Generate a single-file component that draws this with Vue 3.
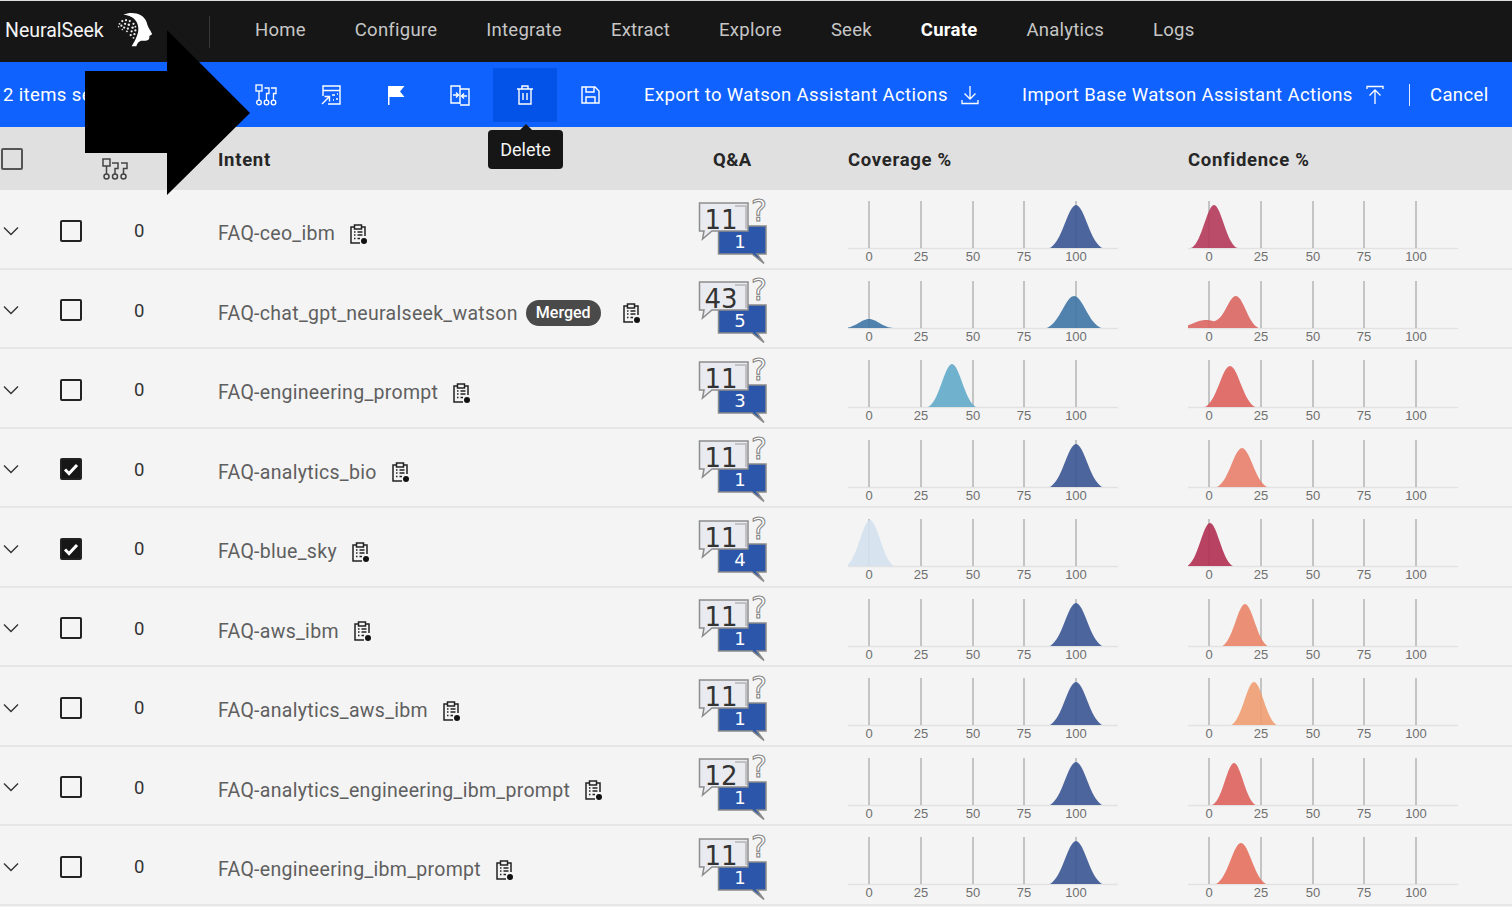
<template>
  <div class="page">
    <nav class="topnav">
      <div class="brand">
        <span class="brand-name">NeuralSeek</span>
        <svg class="brand-logo" width="47" height="42" viewBox="0 0 50 45">
          <path fill="#fff" d="M14 7C24 3 36 6 39 15C40 19 41 21 43 24L45 28L42 30C42.500 33 41 35 38 35L33 35C30 36 29 38 28 41L23 41C28 33 31 26 30 20C29 12 22 8 14 7Z" />
          <circle v-for="(dot, i) in logoDots" :key="i" :cx="dot[0]" :cy="dot[1]" :r="dot[2]" fill="#eee" />
        </svg>
      </div>
      <span class="nav-divider"></span>
      <div class="nav-links">
        <a v-for="link in navLinks" :key="link" class="nav-link" :class="{ active: link === 'Curate' }">{{ link }}</a>
      </div>
    </nav>

    <div class="action-bar">
      <span class="selected-count">2 items selected</span>
      <div class="action-icons">
        <button class="icon-btn">
          <svg width="24" height="24" viewBox="0 0 24 24" fill="none" stroke="#fff" stroke-width="1.300">
            <rect x="2" y="2" width="6" height="6" />
            <path d="M5 8V17M10.500 5H15V10.500H12.500V17M17 5H22V10.500H19.500V17" />
            <circle cx="5" cy="19.500" r="2.300" />
            <circle cx="12.500" cy="19.500" r="2.300" />
            <circle cx="19.500" cy="19.500" r="2.300" />
          </svg>
        </button>
        <button class="icon-btn">
          <svg width="24" height="24" viewBox="0 0 24 24" fill="none" stroke="#fff" stroke-width="1.400">
            <path d="M4 13V3H21V21H9M4 7.500H21" />
            <path d="M3 21L10 14M5.500 13.500H10.500V18.500M13 12H16M17 16H19M14 17H15M18 11H19" />
          </svg>
        </button>
        <button class="icon-btn">
          <svg width="24" height="24" viewBox="0 0 24 24" fill="#fff">
            <path d="M4 3H20.500L16 8.500L20.500 14H5.500V22H4Z" />
          </svg>
        </button>
        <button class="icon-btn">
          <svg width="24" height="24" viewBox="0 0 24 24" fill="none" stroke="#fff" stroke-width="1.400">
            <path d="M12 20H3V3H12V21M12 6H21V22H12" />
            <path d="M5 12H10M8 9.500L10.500 12L8 14.500M19 13H14M16 10.500L13.500 13L16 15.500" />
          </svg>
        </button>
        <button class="icon-btn is-hover">
          <svg width="24" height="24" viewBox="0 0 24 24" fill="none" stroke="#fff" stroke-width="1.400">
            <path d="M4 6H20M9 6V3H15V6M6 6V21H18V6M10 10V17M14 10V17" />
          </svg>
        </button>
        <button class="icon-btn">
          <svg width="24" height="24" viewBox="0 0 24 24" fill="none" stroke="#fff" stroke-width="1.400">
            <path d="M4 4H17L21 8V20H4ZM8 4V9H16V4M8 20V14H17V20" />
          </svg>
        </button>
      </div>
      <a class="bar-action bar-export">
        Export to Watson Assistant Actions
        <svg width="20" height="20" viewBox="0 0 20 20" fill="none" stroke="#fff" stroke-width="1.300">
          <path d="M10 1V14M4.500 8.500L10 14L15.500 8.500M2 15V18.500H18V15" />
        </svg>
      </a>
      <a class="bar-action bar-import">
        Import Base Watson Assistant Actions
        <svg width="20" height="20" viewBox="0 0 20 20" fill="none" stroke="#fff" stroke-width="1.300">
          <path d="M10 19V5M4.500 10.500L10 5L15.500 10.500M2 4V1.500H18V4" />
        </svg>
      </a>
      <span class="bar-divider"></span>
      <a class="bar-action bar-cancel">Cancel</a>
      <div class="tooltip">Delete</div>
    </div>

    <div class="table">
      <div class="table-head">
        <span class="box head-box"></span>
        <svg class="head-tree" width="28" height="24" viewBox="0 0 28 24" fill="none" stroke="#444" stroke-width="1.500">
          <rect x="2" y="2" width="7" height="7" />
          <path d="M5.500 9V17M11 6H17V11.500H14V17M20 6H26V11.500H22.500V17" />
          <circle cx="5.500" cy="19.500" r="2.500" />
          <circle cx="14" cy="19.500" r="2.500" />
          <circle cx="22.500" cy="19.500" r="2.500" />
        </svg>
        <span class="head-label head-intent">Intent</span>
        <span class="head-label head-qa">Q&amp;A</span>
        <span class="head-label">Coverage %</span>
        <span class="head-label">Confidence %</span>
      </div>

      <div v-for="row in rows" :key="row.name" class="table-row">
        <svg class="chevron" width="16" height="10" viewBox="0 0 16 10" fill="none" stroke="#333" stroke-width="1.400">
          <path d="M1 1.500L8 8.500L15 1.500" />
        </svg>
        <span class="box row-box" :class="{ checked: row.checked }">
          <svg v-if="row.checked" width="16" height="14" viewBox="0 0 16 14" fill="none" stroke="#fff" stroke-width="3">
            <path d="M2 7.500L6 11.500L14 3" />
          </svg>
        </span>
        <span class="count">0</span>
        <div class="intent">
          <span class="intent-name">{{ row.name }}</span>
          <span v-if="row.merged" class="merged">Merged</span>
          <svg class="clip" width="20" height="22" viewBox="0 0 20 22" fill="none" stroke="#222" stroke-width="1.500">
            <path d="M6 4H3V20H12M14 4H17V13" />
            <rect x="6.500" y="2" width="7" height="4" />
            <path d="M6 9H7.500M9.500 9H14.500M6 12H7.500M9.500 12H14.500M6 15.500H7.500M9.500 15.500H12" />
            <circle cx="16" cy="18" r="3" fill="#111" stroke="none" />
          </svg>
        </div>
        <svg class="qa" width="80" height="78" viewBox="0 -6 80 78">
          <path d="M23.500 30H71V58H62L69 67.500L57 58H23.500Z" fill="#2b56a9" stroke="#8a8a8a" stroke-width="1.500" />
          <text x="64" y="25" class="qa-mark">?</text>
          <path d="M4.500 7H53V35H17L7.500 43L9 35H4.500Z" fill="#e9ebf0" stroke="#8d8d8d" stroke-width="1.500" />
          <path d="M40 10H51V33" fill="none" stroke="#b5b5b5" stroke-width="1.500" />
          <text x="26" y="33" class="qa-total">{{ row.total }}</text>
          <text x="45" y="52" class="qa-part">{{ row.part }}</text>
        </svg>
        <svg v-for="chart in row.charts" :key="chart.key" class="chart" width="272" height="79" viewBox="0 0 272 79">
          <path d="M0 58.500H270" stroke="#e2e2e2" stroke-width="1.500" />
          <path v-for="tick in ticks" :key="tick.label" :d="`M${tick.x} 11V58`" stroke="#b4b4b4" stroke-width="1.500" />
          <path :d="chart.d" :fill="chart.color" fill-opacity="0.9" />
          <text v-for="tick in ticks" :key="tick.label" :x="tick.x" y="70.500" class="tick-label">{{ tick.label }}</text>
        </svg>
      </div>
    </div>

    <svg class="big-arrow" width="170" height="170" viewBox="0 0 170 170">
      <polygon points="0,41 82,41 82,0 165,83 82,165 82,123 0,123" fill="#000" />
    </svg>
  </div>
</template>

<script setup>
const navLinks = ['Home', 'Configure', 'Integrate', 'Extract', 'Explore', 'Seek', 'Curate', 'Analytics', 'Logs'];

const logoDots = [
  [10, 17, 1], [13, 14, 1.2], [17, 13, 1.2], [21, 14, 1.2], [25, 17, 1.2],
  [12, 19, 1.2], [16, 17, 1.2], [20, 18, 1.3], [24, 21, 1.3], [27, 20, 1],
  [15, 21, 1.2], [19, 22, 1.2], [23, 25, 1.2], [27, 24, 1.2], [18, 25, 1],
  [22, 29, 1.2], [26, 28, 1.2], [25, 32, 1], [9, 20, 0.8], [13, 23, 0.8],
];

const ticks = [
  { x: 21, label: '0' },
  { x: 73, label: '25' },
  { x: 125, label: '50' },
  { x: 176, label: '75' },
  { x: 228, label: '100' },
];

// each bump is [peak x, peak height, sigma], tails cut off so the foot stays narrow
const TAIL = 0.06;
const curvePath = (bumps) => {
  let d = 'M0 58';
  for (let x = 0; x <= 270; x += 1.5) {
    let h = 0;
    for (const [cx, height, sigma] of bumps) {
      const g = Math.exp(-((x - cx) ** 2) / (2 * sigma * sigma));
      h += height * Math.max(0, (g - TAIL) / (1 - TAIL));
    }
    d += `L${x} ${(58 - h).toFixed(2)}`;
  }
  return `${d}L270 58Z`;
};

const navy = '#3a5592';

const rowData = [
  { name: 'FAQ-ceo_ibm', total: 11, part: 1, coverage: [[228, 43, 11]], covColor: navy, confidence: [[26, 43, 9.5]], confColor: '#b43a5a' },
  { name: 'FAQ-chat_gpt_neuralseek_watson', merged: true, total: 43, part: 5, coverage: [[21, 9, 10], [226, 32, 11.5]], covColor: '#3f75a5', confidence: [[48, 32, 9.5], [18, 8, 13]], confColor: '#dc6660' },
  { name: 'FAQ-engineering_prompt', total: 11, part: 3, coverage: [[104, 43, 10]], covColor: '#62aaca', confidence: [[42, 41, 10.5]], confColor: '#de625c' },
  { name: 'FAQ-analytics_bio', checked: true, total: 11, part: 1, coverage: [[228, 43, 11]], covColor: navy, confidence: [[54, 39, 10.5]], confColor: '#e8806a' },
  { name: 'FAQ-blue_sky', checked: true, total: 11, part: 4, coverage: [[22, 46, 10]], covColor: '#d4e2ef', confidence: [[22, 43, 9.5]], confColor: '#b12f52' },
  { name: 'FAQ-aws_ibm', total: 11, part: 1, coverage: [[228, 43, 11]], covColor: navy, confidence: [[57, 42, 9.5]], confColor: '#ea8568' },
  { name: 'FAQ-analytics_aws_ibm', total: 11, part: 1, coverage: [[228, 43, 11]], covColor: navy, confidence: [[66, 43, 9.5]], confColor: '#f09e72' },
  { name: 'FAQ-analytics_engineering_ibm_prompt', total: 12, part: 1, coverage: [[228, 43, 11]], covColor: navy, confidence: [[46, 42, 9]], confColor: '#de625c' },
  { name: 'FAQ-engineering_ibm_prompt', total: 11, part: 1, coverage: [[228, 43, 11]], covColor: navy, confidence: [[53, 41, 10.5]], confColor: '#e4705e' },
];

const rows = rowData.map((row) => ({
  ...row,
  charts: [
    { key: 'coverage', d: curvePath(row.coverage), color: row.covColor },
    { key: 'confidence', d: curvePath(row.confidence), color: row.confColor },
  ],
}));
</script>

<style>
html,
body {
  margin: 0;
  background: #f4f4f4;
  overflow: hidden;
}
</style>

<style scoped>
.page {
  position: relative;
  width: 1512px;
  height: 907px;
  overflow: hidden;
  font-family: Roboto, "Noto Sans", sans-serif;
  color: #161616;
}

.topnav {
  box-sizing: border-box;
  height: 62px;
  display: flex;
  align-items: center;
  background: #161616;
  border-top: 1px solid #ddd;
}

.brand {
  width: 209px;
  display: flex;
  align-items: center;
  padding-left: 5px;
  box-sizing: border-box;
}

.brand-name {
  color: #f4f4f4;
  font-size: 19.500px;
  margin-top: -3px;
}

.brand-logo {
  margin-left: 6px;
  margin-top: -6px;
}

.nav-divider {
  width: 1px;
  height: 32px;
  background: #393939;
}

.nav-links {
  display: flex;
  gap: 49px;
  margin-left: 45px;
  margin-top: -4px;
}

.nav-link {
  color: #c6c6c6;
  font-size: 18.500px;
  letter-spacing: 0.25px;
}

.nav-link.active {
  color: #fff;
  font-weight: 700;
}

.action-bar {
  position: relative;
  height: 65px;
  display: flex;
  align-items: center;
  background: #0f62fe;
  color: #fff;
  font-size: 18.500px;
  letter-spacing: 0.38px;
}

.selected-count {
  width: 234px;
  padding-left: 3px;
  box-sizing: border-box;
  white-space: nowrap;
}

.action-icons {
  display: flex;
  width: 410px;
}

.icon-btn {
  width: 64.700px;
  height: 54px;
  display: flex;
  align-items: center;
  justify-content: center;
  border: 0;
  padding: 0;
  background: transparent;
}

.icon-btn.is-hover {
  background: #0353e9;
}

.bar-action {
  display: flex;
  align-items: center;
  gap: 12px;
  white-space: nowrap;
}

.bar-export {
  width: 378px;
}

.bar-import {
  width: 387px;
}

.bar-divider {
  width: 1px;
  height: 22px;
  background: #dfe9ff;
}

.bar-cancel {
  margin-left: 20px;
}

.tooltip {
  position: absolute;
  top: 68px;
  left: 488px;
  width: 75px;
  height: 39px;
  display: flex;
  align-items: center;
  justify-content: center;
  border-radius: 4px;
  background: #161616;
  color: #f4f4f4;
  font-size: 18px;
  letter-spacing: 0;
  z-index: 2;
}

.tooltip::before {
  content: "";
  position: absolute;
  top: -6px;
  left: 32px;
  border-left: 6px solid transparent;
  border-right: 6px solid transparent;
  border-bottom: 6px solid #161616;
}

.table-head,
.table-row {
  display: grid;
  align-items: center;
}

.table-head {
  position: relative;
  height: 63px;
  grid-template-columns: 218px 480px 150px 340px 1fr;
  background: #e0e0e0;
}

.head-tree {
  margin: 20px 0 0 101px;
}

.head-label {
  font-size: 18.500px;
  font-weight: 700;
  letter-spacing: 0.7px;
  color: #262626;
  margin-top: 2px;
}

.head-qa {
  margin-left: 15px;
  letter-spacing: 0.4px;
}

.table-row {
  box-sizing: border-box;
  height: 79.500px;
  grid-template-columns: 60px 60px 98px 480px 150px 340px 1fr;
  background: #f4f4f4;
  border-bottom: 2px solid #e6e6e6;
}

.chevron {
  margin: 2px 0 0 3px;
}

.box {
  box-sizing: border-box;
  width: 22px;
  height: 22px;
  display: flex;
  align-items: center;
  justify-content: center;
  border: 2px solid #222;
  border-radius: 2px;
}

.row-box {
  margin: 2px 0 0;
}

.head-box {
  position: absolute;
  left: 1px;
  top: 21px;
  border-color: #555;
}

.box.checked {
  background: #161616;
}

.count {
  justify-self: start;
  margin: 3px 0 0 14px;
  font-size: 18.500px;
  color: #333;
}

.intent {
  display: flex;
  align-items: center;
  margin-top: 8px;
}

.intent-name {
  font-size: 19.500px;
  color: #5f5f5f;
  letter-spacing: 0.3px;
}

.merged {
  margin: 0 7px 0 8px;
  padding: 3px 10px 4px;
  border-radius: 14px;
  background: #4a4a4a;
  color: #fff;
  font-size: 16px;
  font-weight: 500;
}

.clip {
  margin-left: 13px;
}

.qa {
  margin: -2px 0 0 -3px;
}

.qa-mark {
  font-family: "DejaVu Sans", sans-serif;
  font-size: 30px;
  text-anchor: middle;
  fill: #fff;
  stroke: #808080;
  stroke-width: 1;
}

.qa-total {
  font-family: "DejaVu Sans", sans-serif;
  font-size: 26px;
  text-anchor: middle;
  fill: #333;
}

.qa-part {
  font-family: "DejaVu Sans", sans-serif;
  font-size: 18px;
  text-anchor: middle;
  fill: #fff;
}

.chart {
  display: block;
}

.tick-label {
  font-family: "Liberation Sans", sans-serif;
  font-size: 13px;
  text-anchor: middle;
  fill: #6f6f6f;
}

.big-arrow {
  position: absolute;
  left: 85px;
  top: 30px;
}
</style>
